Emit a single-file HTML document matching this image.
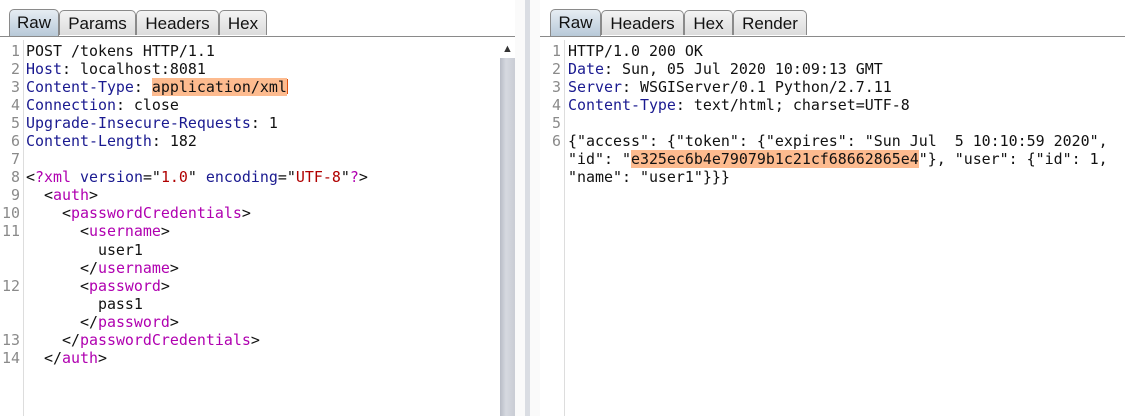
<!DOCTYPE html>
<html><head><style>
body{margin:0;width:1125px;height:416px;background:#fff;position:relative;overflow:hidden;font-family:"Liberation Sans",sans-serif}
.tabs{position:absolute;top:10px;height:26px}
.tab{position:absolute;top:0;height:25px;border:1px solid #8a8a8a;border-bottom:none;border-radius:5px 5px 0 0;background:linear-gradient(#f4f4f4,#dcdcdc);font-size:17px;line-height:26px;text-align:center;color:#111;box-sizing:border-box}
.tab.sel{background:linear-gradient(#e6edf3,#b8c9d8);height:27px;top:-1px}
.line{position:absolute;top:36px;height:1px;background:#8a8a8a}
.ed{position:absolute;top:42px;font-family:"DejaVu Sans Mono","Liberation Mono",monospace;font-size:14.95px;line-height:18.05px;white-space:pre;color:#111}
.gut{position:absolute;top:42px;font-family:"DejaVu Sans Mono",monospace;font-size:14.95px;line-height:18.05px;white-space:pre;color:#8a8a8a;text-align:right}
.k{color:#1a1a90}.t{color:#b000b0}.s{color:#b00000}.h{background:#fdbb8f}
.gl{position:absolute;top:40px;width:1px;height:376px;background:#ddd}
</style></head><body>
<div class="line" style="left:0;width:515px"></div>
<div class="tabs" style="left:0">
<div class="tab sel" style="left:9px;width:50px">Raw</div>
<div class="tab" style="left:59px;width:77px">Params</div>
<div class="tab" style="left:136px;width:83px">Headers</div>
<div class="tab" style="left:219px;width:48px">Hex</div>
</div>
<div class="line" style="left:540px;width:585px"></div>
<div class="tabs" style="left:0">
<div class="tab sel" style="left:550px;width:51px">Raw</div>
<div class="tab" style="left:601px;width:83px">Headers</div>
<div class="tab" style="left:684px;width:49px">Hex</div>
<div class="tab" style="left:733px;width:74px">Render</div>
</div>
<div class="gl" style="left:23px"></div>
<div class="gl" style="left:564px"></div>
<div class="gut" style="left:0;width:20px">1
2
3
4
5
6
7
8
9
10
11


12


13
14</div>
<div class="ed" style="left:26px">POST /tokens HTTP/1.1
<span class="k">Host</span>: localhost:8081
<span class="k">Content-Type</span>: <span class="h">application/xml</span><span style="display:inline-block;width:1px;height:15px;background:#e05010;vertical-align:-2px"></span>
<span class="k">Connection</span>: close
<span class="k">Upgrade-Insecure-Requests</span>: 1
<span class="k">Content-Length</span>: 182

&lt;<span class="t">?xml</span> <span class="k">version</span>="<span class="s">1.0</span>" <span class="k">encoding</span>="<span class="s">UTF-8</span>"<span class="t">?</span>&gt;
  &lt;<span class="t">auth</span>&gt;
    &lt;<span class="t">passwordCredentials</span>&gt;
      &lt;<span class="t">username</span>&gt;
        user1
      &lt;/<span class="t">username</span>&gt;
      &lt;<span class="t">password</span>&gt;
        pass1
      &lt;/<span class="t">password</span>&gt;
    &lt;/<span class="t">passwordCredentials</span>&gt;
  &lt;/<span class="t">auth</span>&gt;</div>
<div style="position:absolute;left:500px;top:40px;width:15px;height:376px;background:linear-gradient(90deg,#b8bcc6,#d6d9e0 40%,#c9ccd4)"></div>
<div style="position:absolute;left:500px;top:40px;width:15px;height:18px;background:#fff;text-align:center;font-size:11px;line-height:18px;color:#333">▲</div>
<div style="position:absolute;left:515px;top:0;width:10px;height:416px;background:#fafafa"></div>
<div style="position:absolute;left:525px;top:0;width:5px;height:416px;background:#dadde3"></div>
<div style="position:absolute;left:530px;top:0;width:10px;height:416px;background:#fafafa"></div>
<div class="gut" style="left:540px;width:21px">1
2
3
4
5
6</div>
<div class="ed" style="left:568px">HTTP/1.0 200 OK
<span class="k">Date</span>: Sun, 05 Jul 2020 10:09:13 GMT
<span class="k">Server</span>: WSGIServer/0.1 Python/2.7.11
<span class="k">Content-Type</span>: text/html; charset=UTF-8

{"access": {"token": {"expires": "Sun Jul  5 10:10:59 2020",
"id": "<span class="h">e325ec6b4e79079b1c21cf68662865e4</span>"}, "user": {"id": 1,
"name": "user1"}}}</div>
</body></html>
